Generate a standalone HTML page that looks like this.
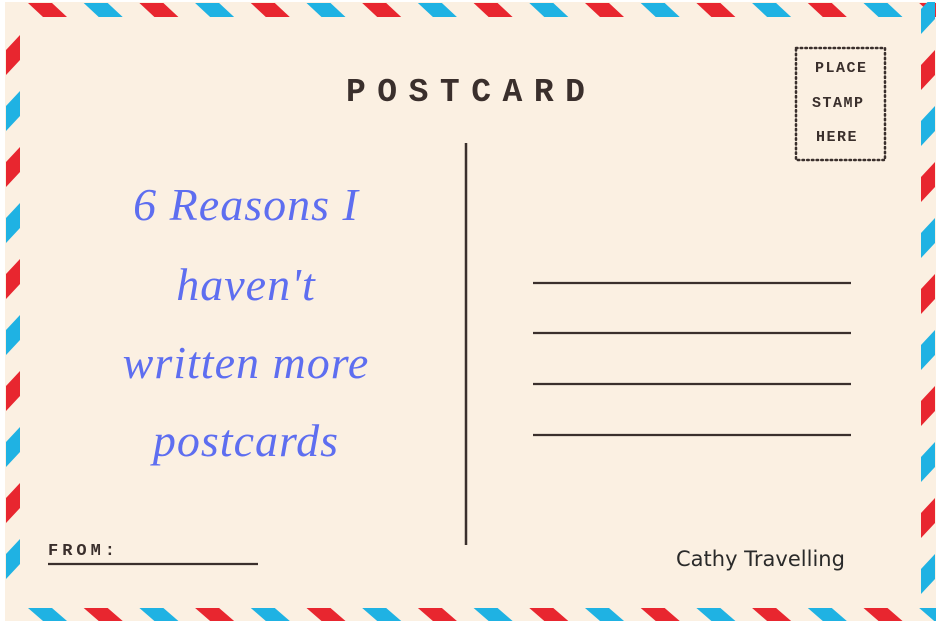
<!DOCTYPE html>
<html><head><meta charset="utf-8"><style>
html,body{margin:0;padding:0;background:#fff;}
#c{position:relative;width:940px;height:624px;overflow:hidden;background:#fff;}
#card{position:absolute;left:5px;top:2px;width:931px;height:619px;background:#fbf0e2;}
svg{position:absolute;left:0;top:0;}
.t{position:absolute;font-family:"Liberation Mono",monospace;color:#3a2f2c;}
.s{position:absolute;font-family:"Liberation Serif",serif;font-style:italic;color:#5e6ef0;font-size:46px;text-align:center;width:340px;left:76px;letter-spacing:1px;}
</style></head><body><div id="c"><div id="card"></div>
<svg width="940" height="624">
<defs><clipPath id="cp"><rect x="5" y="2" width="931" height="619"/></clipPath></defs>
<g id="top" clip-path="url(#cp)"></g>
<line x1="466" y1="143" x2="466" y2="545" stroke="#3a2f2c" stroke-width="2.5"/>
<g stroke="#3a2f2c" stroke-width="2.2">
<line x1="533" y1="283" x2="851" y2="283"/>
<line x1="533" y1="333" x2="851" y2="333"/>
<line x1="533" y1="384" x2="851" y2="384"/>
<line x1="533" y1="435" x2="851" y2="435"/>
<line x1="48" y1="564" x2="258" y2="564"/>
</g>
<rect x="796" y="48" width="89" height="112" fill="none" stroke="#3a2f2c" stroke-width="2.5" stroke-dasharray="1.5 3.2" stroke-linecap="round"/>
</svg>
<div class="t" style="left:346px;top:74px;font-size:33px;font-weight:bold;letter-spacing:11.5px;">POSTCARD</div>
<div class="t" style="left:815px;top:60px;font-size:15px;letter-spacing:1.5px;font-weight:bold;">PLACE</div>
<div class="t" style="left:812px;top:95px;font-size:15px;letter-spacing:1.5px;font-weight:bold;">STAMP</div>
<div class="t" style="left:816px;top:129px;font-size:15px;letter-spacing:1.5px;font-weight:bold;">HERE</div>
<div class="t" style="left:48px;top:542px;font-size:17px;font-weight:bold;letter-spacing:4px;">FROM:</div>
<div class="s" style="top:178px;">6 Reasons I</div>
<div class="s" style="top:258px;">haven't</div>
<div class="s" style="top:336px;">written more</div>
<div class="s" style="top:414px;">postcards</div>
<div style="position:absolute;left:676px;top:547px;font-family:'DejaVu Sans',sans-serif;font-size:21px;color:#2a2a2a;">Cathy Travelling</div>
<script>
(function(){var g=document.getElementById('top'),h='';var R='#e8262f',B='#1fb2e3';
for(var i=0;i<17;i++){var x=28+i*55.7,c=i%2?B:R;
h+='<polygon fill="'+c+'" points="'+x+',3 '+(x+24)+',3 '+(x+39)+',17 '+(x+15)+',17"/>';}
for(var i=0;i<17;i++){var x=28+i*55.7,c=i%2?R:B;
h+='<polygon fill="'+c+'" points="'+x+',608 '+(x+24)+',608 '+(x+39)+',621 '+(x+15)+',621"/>';}
for(var i=0;i<10;i++){var y=35+i*56,c=i%2?B:R;
h+='<polygon fill="'+c+'" points="20,'+y+' 20,'+(y+25)+' 6,'+(y+40)+' 6,'+(y+15)+'"/>';}
for(var i=0;i<11;i++){var y=-6+i*56,c=i%2?R:B;
h+='<polygon fill="'+c+'" points="935,'+y+' 935,'+(y+25)+' 921,'+(y+40)+' 921,'+(y+15)+'"/>';}
g.innerHTML=h;})();
</script>
</div></body></html>
